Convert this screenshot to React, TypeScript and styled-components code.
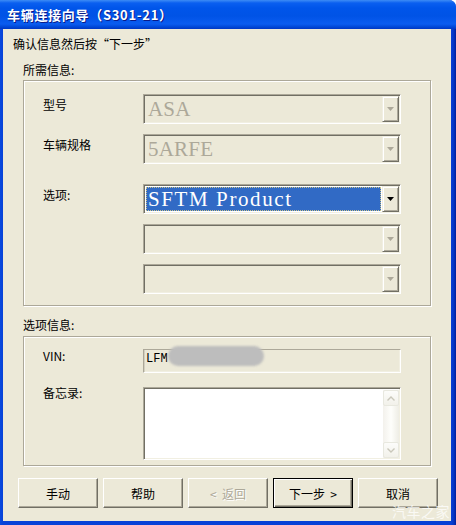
import React from "react";
import styled, { createGlobalStyle } from "styled-components";

const GlobalStyle = createGlobalStyle`
  html, body { margin: 0; padding: 0; background: #ffffff; }
  body { font-family: "Noto Sans CJK SC", "Liberation Sans", sans-serif; }
  * { box-sizing: border-box; }
`;

const Window = styled.div`
  position: relative;
  width: 456px;
  height: 525px;
  display: flex;
  flex-direction: column;
  border-top-right-radius: 7px;
  overflow: hidden;
  background: #0843d8;
`;

const TitleBar = styled.div`
  height: 29px;
  flex: none;
  display: flex;
  align-items: center;
  padding-left: 7px;
  background: linear-gradient(
    180deg,
    #3d8cf5 0px,
    #0a5ff0 3px,
    #0055ea 8px,
    #0053e6 16px,
    #0a5cf0 24px,
    #0047d6 27px,
    #0036c4 29px
  );
`;

const TitleText = styled.span`
  color: #ffffff;
  font-size: 13px;
  font-weight: bold;
  letter-spacing: 0.7px;
  text-shadow: 1px 1px 0 #0a1a88;
  line-height: 16px;
`;

const Frame = styled.div`
  flex: 1;
  display: flex;
  padding: 0 5px 4px 3px;
  background: linear-gradient(90deg, #0a4ade 0, #0842d8 3px, #0740d6 451px, #0433c2 454px, #001e98 456px);
`;

const Body = styled.div`
  flex: 1;
  display: flex;
  flex-direction: column;
  background: #ece9d8;
  padding: 8px 20px 0 20px;
  color: #000000;
  font-size: 12px;
`;

const Instruction = styled.div`
  margin-left: -10px;
  line-height: 14px;
  height: 14px;
`;

const GroupLabel = styled.div<{ $top: number }>`
  margin-top: ${(p) => p.$top}px;
  line-height: 14px;
  height: 14px;
`;

const GroupBox = styled.div<{ $top: number; $pt: number; $pb: number }>`
  margin-top: ${(p) => p.$top}px;
  border: 1px solid #aca899;
  box-shadow: inset 1px 1px 0 #ffffff, 1px 1px 0 #ffffff;
  padding: ${(p) => p.$pt}px 0 ${(p) => p.$pb}px 19px;
  display: grid;
  grid-template-columns: 100px 258px;
  align-items: start;
`;

const FieldLabel = styled.div<{ $gap: number; $pt: number }>`
  margin-top: ${(p) => p.$gap}px;
  padding-top: ${(p) => p.$pt}px;
  line-height: 12px;
  font-size: 12px;
`;

const Combo = styled.div<{ $gap: number; $enabled?: boolean }>`
  margin-top: ${(p) => p.$gap}px;
  height: 30px;
  display: flex;
  padding: 2px;
  border-top: 1px solid #aca899;
  border-left: 1px solid #aca899;
  border-right: 1px solid #ffffff;
  border-bottom: 1px solid #ffffff;
  box-shadow: inset 1px 1px 0 #716f64, inset -1px -1px 0 #f1efe2;
  background: ${(p) => (p.$enabled ? "#ffffff" : "#ece9d8")};
`;

const ComboValue = styled.div<{ $selected?: boolean }>`
  flex: 1;
  margin-right: 1px;
  padding-left: 2px;
  font-family: "Liberation Serif", "Times New Roman", serif;
  font-size: 21px;
  line-height: 25px;
  white-space: nowrap;
  overflow: hidden;
  color: ${(p) => (p.$selected ? "#ffffff" : "#aca899")};
  background: ${(p) => (p.$selected ? "#316ac5" : "transparent")};
  outline: ${(p) => (p.$selected ? "1px dotted #c9c28a" : "none")};
  outline-offset: -1px;
  letter-spacing: ${(p) => (p.$selected ? "1.6px" : "0.2px")};
`;

const DropButton = styled.div`
  width: 17px;
  flex: none;
  margin: -1px -1px -1px 0;
  display: flex;
  align-items: center;
  justify-content: center;
  background: #ece9d8;
  border: 1px solid;
  border-color: #f1efe2 #716f64 #716f64 #f1efe2;
  box-shadow: inset 1px 1px 0 #ffffff, inset -1px -1px 0 #aca899;
`;

const Arrow = ({ enabled }: { enabled?: boolean }) => (
  <svg width="7" height="4" viewBox="0 0 7 4">
    <path d="M0 0h7L3.5 4z" fill={enabled ? "#000000" : "#aca899"} />
  </svg>
);

const ReadField = styled.div`
  position: relative;
  height: 24px;
  padding: 2px 2px;
  border-top: 1px solid #aca899;
  border-left: 1px solid #aca899;
  border-right: 1px solid #ffffff;
  border-bottom: 1px solid #ffffff;
  box-shadow: inset 1px 0 0 #d4d0c0, inset -1px -1px 0 #f1efe2;
  font-family: "Liberation Mono", monospace;
  font-size: 12px;
  line-height: 14px;
  color: #000000;
`;

const Redaction = styled.div`
  position: absolute;
  left: 24px;
  top: -4px;
  width: 96px;
  height: 20px;
  border-radius: 10px;
  background: #bdbdbd;
  filter: blur(0.8px);
`;

const Memo = styled.div<{ $gap: number }>`
  margin-top: ${(p) => p.$gap}px;
  height: 73px;
  display: flex;
  justify-content: flex-end;
  padding: 2px 1px 1px 2px;
  background: #ffffff;
  border-top: 1px solid #aca899;
  border-left: 1px solid #aca899;
  border-right: 1px solid #ffffff;
  border-bottom: 1px solid #ffffff;
  box-shadow: inset 1px 1px 0 #716f64, inset -1px -1px 0 #f1efe2;
`;

const ScrollBar = styled.div`
  width: 16px;
  display: flex;
  flex-direction: column;
  justify-content: space-between;
  background: linear-gradient(90deg, #f3f1ec 0, #fefefb 50%, #eeede5 100%);
`;

const ScrollBtn = styled.div`
  height: 16px;
  display: flex;
  align-items: center;
  justify-content: center;
  border: 1px solid #e8e8df;
  border-radius: 2px;
  background: linear-gradient(180deg, #fcfcfa 0, #f2f1ea 100%);
`;

const Chevron = ({ up }: { up?: boolean }) => (
  <svg width="8" height="5" viewBox="0 0 8 5">
    <path
      d={up ? "M0.5 4.5L4 1L7.5 4.5" : "M0.5 0.5L4 4L7.5 0.5"}
      fill="none"
      stroke="#c9c7ba"
      strokeWidth="1.4"
    />
  </svg>
);

const ButtonRow = styled.div`
  margin: 12px -18px 0 -5px;
  display: flex;
  gap: 5px;
`;

const Button = styled.div<{ $default?: boolean; $disabled?: boolean }>`
  width: 80px;
  height: 30px;
  display: flex;
  align-items: center;
  justify-content: center;
  font-size: 12px;
  background: #ece9d8;
  border: 1px solid;
  border-color: ${(p) =>
    p.$default ? "#000000" : "#ffffff #716f64 #716f64 #ffffff"};
  box-shadow: ${(p) =>
    p.$default
      ? "inset 1px 1px 0 #ffffff, inset -1px -1px 0 #716f64, inset -2px -2px 0 #aca899"
      : "inset -1px -1px 0 #aca899"};
  color: ${(p) => (p.$disabled ? "#aca899" : "#000000")};
  text-shadow: ${(p) => (p.$disabled ? "1px 1px 0 #ffffff" : "none")};
  white-space: pre;
`;

const Watermark = styled.div`
  position: absolute;
  right: 6px;
  bottom: 4px;
  font-size: 14px;
  color: rgba(255, 255, 255, 0.75);
  letter-spacing: 0.5px;
`;

export default function App() {
  return (
    <>
      <GlobalStyle />
      <Window>
        <TitleBar>
          <TitleText>车辆连接向导（S301-21）</TitleText>
        </TitleBar>
        <Frame>
          <Body>
            <Instruction>确认信息然后按“下一步”</Instruction>
            <GroupLabel $top={12}>所需信息:</GroupLabel>
            <GroupBox $top={3} $pt={13} $pb={11}>
              <FieldLabel $gap={0} $pt={5}>型号</FieldLabel>
              <Combo $gap={0}>
                <ComboValue>ASA</ComboValue>
                <DropButton>
                  <Arrow />
                </DropButton>
              </Combo>
              <FieldLabel $gap={10} $pt={5}>车辆规格</FieldLabel>
              <Combo $gap={10}>
                <ComboValue>5ARFE</ComboValue>
                <DropButton>
                  <Arrow />
                </DropButton>
              </Combo>
              <FieldLabel $gap={20} $pt={5}>选项:</FieldLabel>
              <Combo $gap={20} $enabled>
                <ComboValue $selected>SFTM Product</ComboValue>
                <DropButton>
                  <Arrow enabled />
                </DropButton>
              </Combo>
              <div />
              <Combo $gap={10}>
                <ComboValue />
                <DropButton>
                  <Arrow />
                </DropButton>
              </Combo>
              <div />
              <Combo $gap={10}>
                <ComboValue />
                <DropButton>
                  <Arrow />
                </DropButton>
              </Combo>
            </GroupBox>
            <GroupLabel $top={12}>选项信息:</GroupLabel>
            <GroupBox $top={4} $pt={12} $pb={5}>
              <FieldLabel $gap={0} $pt={1}>VIN:</FieldLabel>
              <ReadField>
                LFM
                <Redaction />
              </ReadField>
              <FieldLabel $gap={14} $pt={0}>备忘录:</FieldLabel>
              <Memo $gap={14}>
                <ScrollBar>
                  <ScrollBtn>
                    <Chevron up />
                  </ScrollBtn>
                  <ScrollBtn>
                    <Chevron />
                  </ScrollBtn>
                </ScrollBar>
              </Memo>
            </GroupBox>
            <ButtonRow>
              <Button>手动</Button>
              <Button>帮助</Button>
              <Button $disabled>{"<  返回"}</Button>
              <Button $default>{"下一步  >"}</Button>
              <Button>取消</Button>
            </ButtonRow>
          </Body>
        </Frame>
        <Watermark>汽车之家</Watermark>
      </Window>
    </>
  );
}
